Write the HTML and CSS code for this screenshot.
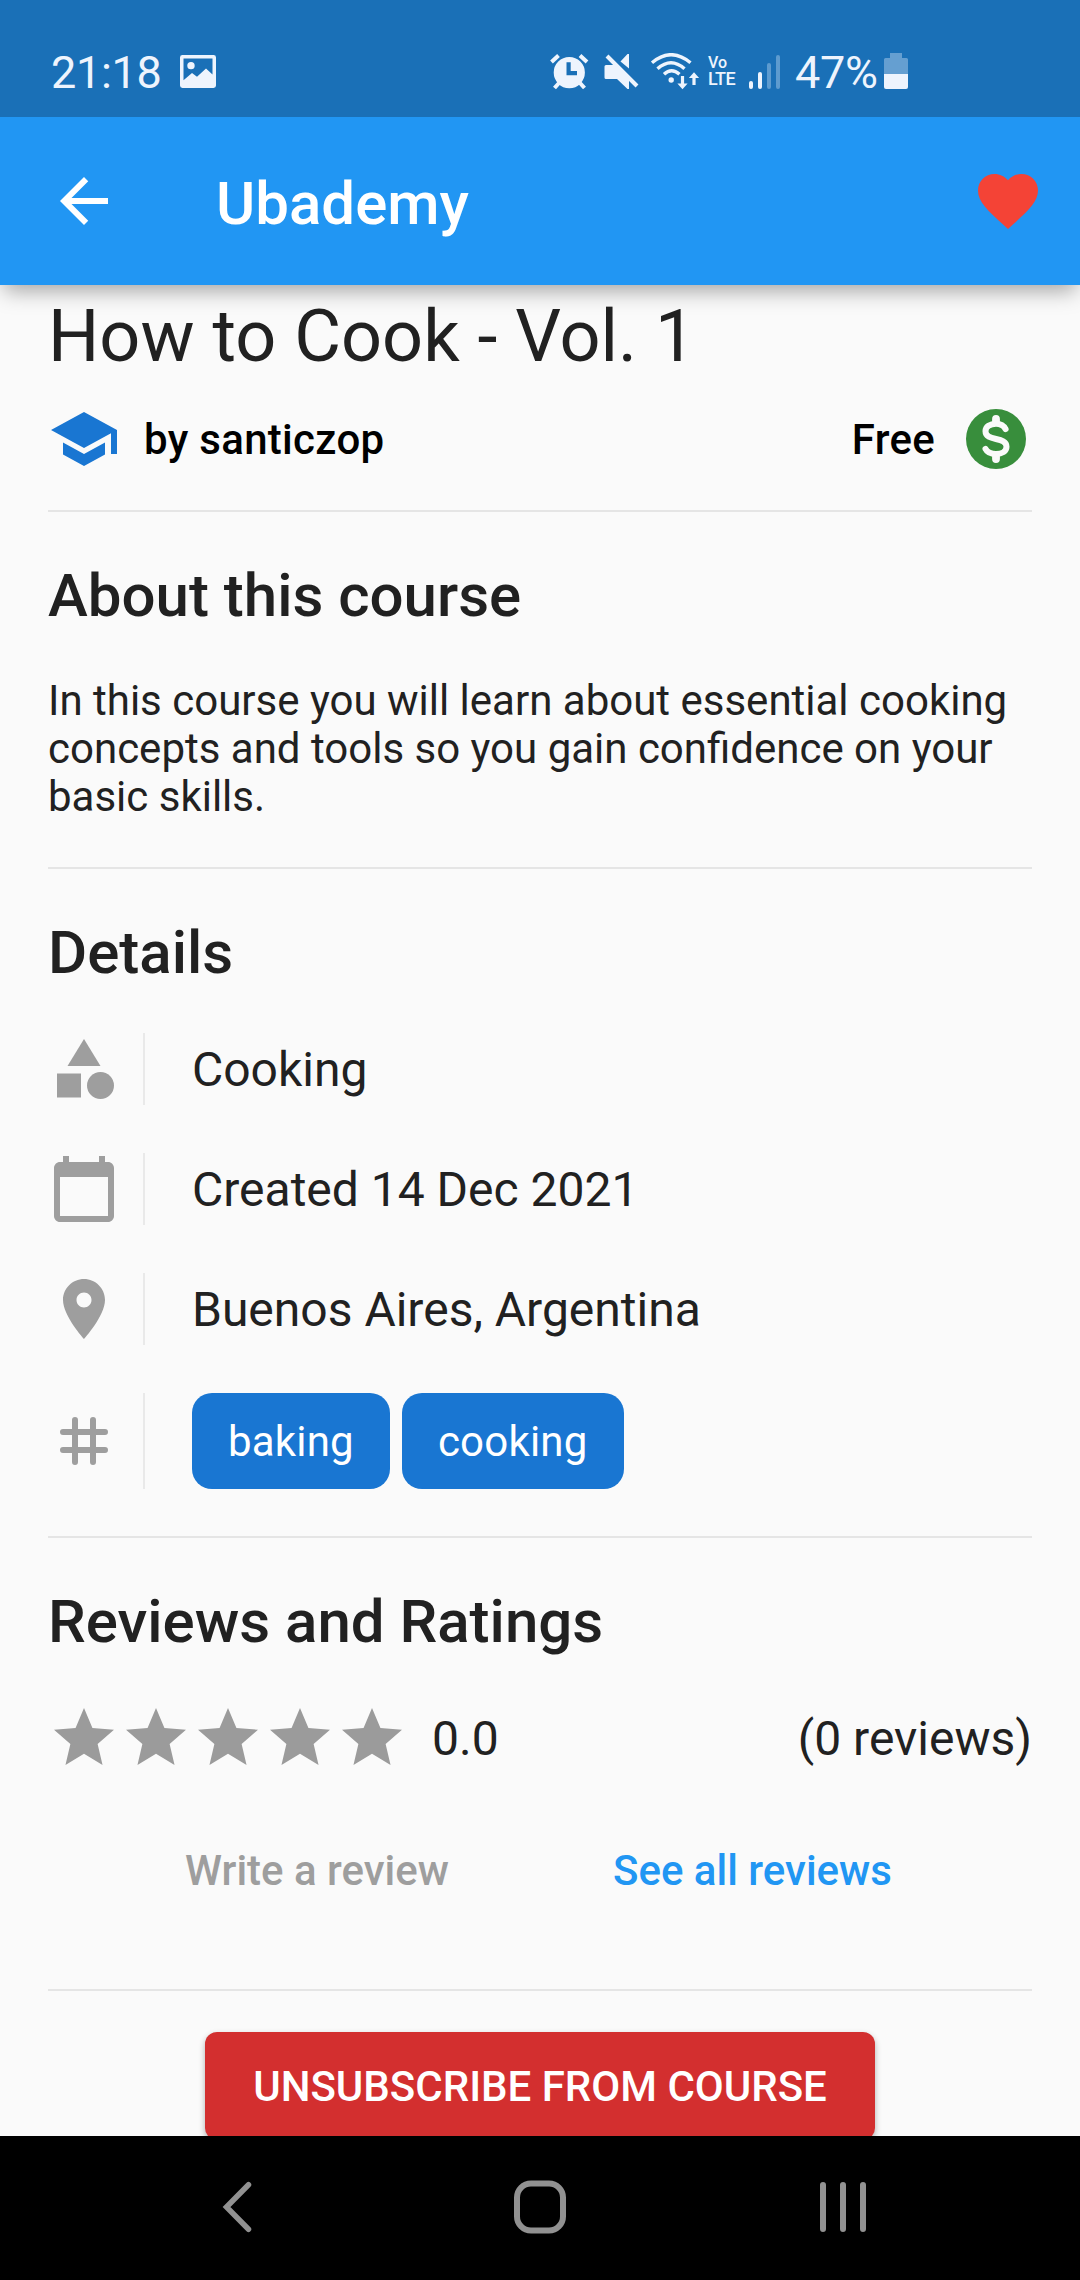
FILE: index.html
```html
<!DOCTYPE html>
<html lang="en">
<head>
<meta charset="utf-8">
<title>Ubademy</title>
<link rel="stylesheet" href="styles.css">
</head>
<body>
<div class="screen">
  <header class="status">
    <span class="time">21:18</span>
    <svg class="st-image" width="36" height="33" viewBox="0 0 36 34" preserveAspectRatio="none"><path fill-rule="evenodd" d="M2.500 0h31a2.500 2.500 0 0 1 2.500 2.500v29a2.500 2.500 0 0 1-2.500 2.500h-31a2.500 2.500 0 0 1-2.500-2.500v-29a2.500 2.500 0 0 1 2.500-2.500zM3.500 3.500v22.500l8.500-7.500 5 4 9-8.500 6.500 6V3.500z"/><circle cx="11" cy="11" r="3.700"/></svg>
    <span class="spacer"></span>
    <svg class="st-alarm" width="40" height="38" viewBox="0 0 40 38"><path fill-rule="evenodd" d="M19.300 3a15.600 15.600 0 1 1 0 31.200 15.600 15.600 0 0 1 0-31.200zM16.500 8.300v12.900h10.500v-4.200h-6.300V8.300z"/><path d="M1.500 8l7-6.500M37 8l-7-6.500M9 29l-4.500 5M30 29l4.500 5" fill="none" stroke="#eef4fd" stroke-width="4"/></svg>
    <svg class="st-mute" width="36" height="38" viewBox="0 0 36 38"><path d="M26 0v14.500L17.500 7.500 24.500 0zM3 11h9l14 14v10h-1.500L14 25H3q-1.500 0-1.500-1.500v-11Q1.500 11 3 11z"/><path d="M4 2l30 30" stroke="#eef4fd" stroke-width="4"/></svg>
    <svg class="st-wifi" width="50" height="38" viewBox="0 0 50 38"><g fill="none" stroke="#eef4fd" stroke-width="3.400"><path d="M2 9.700q19-16 38.500 0M7.500 15.700q13.500-12 27 0M14 21.200q7.500-7 15.500 0"/></g><circle cx="21.200" cy="27" r="2.700"/><path d="M30.900 23h3.200v7.500h3.500l-5.100 5.700-5.100-5.700h3.500zM42.400 32h3.200v-7h3.500L44 19.300 38.900 25h3.500z"/></svg>
    <span class="volte"><span class="vo">Vo</span><span>LTE</span></span>
    <svg class="st-signal" width="32" height="34" viewBox="0 0 32 34"><rect x="0" y="26" width="4" height="8" rx="2"/><rect x="9" y="17" width="4" height="17" rx="2"/><rect class="dim" x="18" y="8" width="4" height="26" rx="2"/><rect class="dim" x="27" y="0" width="4" height="34" rx="2"/></svg>
    <span class="pct">47%</span>
    <svg class="st-batt" width="24" height="36" viewBox="0 0 24 36"><path class="dim2" d="M6 0h12v5h4.500Q24 5 24 6.500V21H0V6.500Q0 5 1.500 5H6z"/><path d="M0 21h24v13q0 2-2 2H2q-2 0-2-2z"/></svg>
  </header>
  <nav class="appbar">
    <svg class="back" width="72" height="72" viewBox="0 0 24 24"><path fill="#fff" d="M20 11H7.830l5.590-5.590L12 4l-8 8 8 8 1.410-1.410L7.830 13H20v-2z"/></svg>
    <h1>Ubademy</h1>
    <svg class="heart" width="72" height="72" viewBox="0 0 24 24"><path fill="#f44336" d="M12 21.350l-1.450-1.320C5.400 15.360 2 12.280 2 8.500 2 5.420 4.420 3 7.500 3c1.740 0 3.410.810 4.500 2.090C13.090 3.810 14.760 3 16.500 3 19.580 3 22 5.420 22 8.500c0 3.780-3.400 6.860-8.550 11.540L12 21.350z"/></svg>
  </nav>
  <main>
    <h2 class="title">How to Cook - Vol. 1</h2>
    <div class="byline">
      <svg width="72" height="72" viewBox="0 0 24 24"><path fill="#1976d2" d="M5 13.180v4L12 21l7-3.820v-4L12 17l-7-3.820zM12 3L1 9l11 6 9-4.910V17h2V9L12 3z"/></svg>
      <span class="author">by santiczop</span>
      <span class="price">Free</span>
      <svg width="72" height="72" viewBox="0 0 24 24"><circle cx="12" cy="12" r="10" fill="#388e3c"/><g fill="none" stroke="#fafafa" stroke-linecap="round"><path d="M15.200 8.700C14.600 7.500 13.500 6.900 12 6.900c-2 0-3.500 1-3.500 2.500 0 3.500 7 1.700 7 5.200 0 1.500-1.500 2.400-3.500 2.400-1.700 0-2.900-.5-3.500-1.700" stroke-width="2"/><path d="M12 5.300v1M12 17.700v1" stroke-width="2.600"/></g></svg>
    </div>
    <section class="about">
      <h3>About this course</h3>
      <p>In this course you will learn about essential cooking concepts and tools so you gain confidence on your basic skills.</p>
    </section>
    <section class="details">
      <h3>Details</h3>
      <div class="row"><svg width="72" height="72" viewBox="0 0 24 24"><path d="M12 2l-5.500 9h11z"/><circle cx="17.500" cy="17.500" r="4.500"/><path d="M3 13.500h8v8H3z"/></svg><span class="cell">Cooking</span></div>
      <div class="row"><svg width="72" height="72" viewBox="0 0 24 24"><path d="M20 3h-1V1h-2v2H7V1H5v2H4c-1.100 0-2 .9-2 2v16c0 1.100.9 2 2 2h16c1.100 0 2-.9 2-2V5c0-1.100-.9-2-2-2zm0 18H4V8h16v13z"/></svg><span class="cell">Created 14 Dec 2021</span></div>
      <div class="row"><svg width="72" height="72" viewBox="0 0 24 24"><path d="M12 2C8.130 2 5 5.130 5 9c0 5.250 7 13 7 13s7-7.750 7-13c0-3.870-3.130-7-7-7zm0 9.500c-1.380 0-2.500-1.120-2.500-2.500s1.120-2.500 2.500-2.500 2.500 1.120 2.500 2.500-1.120 2.500-2.500 2.500z"/></svg><span class="cell">Buenos Aires, Argentina</span></div>
      <div class="row tags"><svg width="72" height="72" viewBox="0 0 24 24"><path d="M5 9h14M5 15h14M9 5v14M15 5v14" fill="none" stroke="#9e9e9e" stroke-width="2" stroke-linecap="round"/></svg><span class="cell"><span class="tag">baking</span><span class="tag">cooking</span></span></div>
    </section>
    <section class="reviews">
      <h3>Reviews and Ratings</h3>
      <div class="rating">
        <svg width="360" height="72" viewBox="0 0 120 24"><defs><path id="star" d="M12 17.270L18.180 21l-1.640-7.030L22 9.240l-7.190-.61L12 2 9.190 8.630 2 9.240l5.460 4.730L5.820 21z"/></defs><use href="#star"/><use href="#star" x="24"/><use href="#star" x="48"/><use href="#star" x="72"/><use href="#star" x="96"/></svg>
        <span class="score">0.0</span>
        <span class="count">(0 reviews)</span>
      </div>
      <div class="actions"><span class="write">Write a review</span><span class="all">See all reviews</span></div>
    </section>
    <div class="cta"><button>UNSUBSCRIBE FROM COURSE</button></div>
  </main>
  <footer class="navbar">
    <svg width="40" height="54" viewBox="0 0 40 54"><path d="M27.500 4.750L5.500 27l22 22.250" fill="none" stroke="#919191" stroke-width="5.500" stroke-linecap="round"/></svg>
    <svg width="54" height="54" viewBox="0 0 54 54"><rect x="4" y="3.500" width="46" height="47" rx="14" fill="none" stroke="#919191" stroke-width="6"/></svg>
    <svg width="48" height="54" viewBox="0 0 48 54"><path d="M4 5v44M24 5v44M44 5v44" stroke="#919191" stroke-width="6" stroke-linecap="round"/></svg>
  </footer>
</div>
</body>
</html>
```
FILE: styles.css
```css
* { box-sizing: border-box; margin: 0; padding: 0; }
body { font-family: Roboto, "Liberation Sans", sans-serif; background: #fafafa; color: #212121; }
svg { display: block; flex: none; }
.screen { width: 1080px; height: 2280px; display: flex; flex-direction: column; overflow: hidden; }

.status { height: 117px; flex: none; position: relative; z-index: 2; background: #1a70b7; color: #eef4fd; fill: #eef4fd; display: flex; align-items: flex-start; padding: 0 172px 0 51px; }
.time, .pct { font-size: 45px; line-height: 54px; padding-top: 46px; letter-spacing: -.3px; }
.time { width: 113px; }
.st-image { margin: 55px 0 0 16px; }
.spacer { flex: 1; }
.st-alarm { margin-top: 54px; }
.st-mute { margin: 54px 0 0 13px; }
.st-wifi { margin: 53px 0 0 11px; }
.volte { display: flex; flex-direction: column; font-size: 18px; font-weight: 500; line-height: 16px; letter-spacing: -.5px; margin: 55px 0 0 8px; width: 29px; }
.vo { font-size: 16px; letter-spacing: 0; }
.st-signal { margin: 55px 0 0 12px; }
.dim { fill: #5d9bcf; }
.dim2 { fill: #659fd1; }
.pct { margin-left: 14px; width: 83px; }
.st-batt { margin: 53px 0 0 6px; }

.appbar { height: 168px; flex: none; background: #2196f3; display: flex; align-items: center; padding: 0 36px 0 48px; position: relative; z-index: 1; box-shadow: 0 10px 20px -4px rgba(0,0,0,.34); }
.appbar h1 { flex: 1; margin-left: 96px; padding-top: 5px; font-size: 60px; font-weight: 500; line-height: 70px; color: #fff; }

main { flex: 1; min-height: 0; overflow: hidden; padding: 10px 48px 0; display: flex; flex-direction: column; }
.title { font-size: 72px; font-weight: 400; line-height: 84px; }
.byline { display: flex; align-items: center; margin-top: 24px; height: 72px; font-size: 42px; font-weight: 500; color: #000; letter-spacing: .3px; }
.author { flex: 1; margin-left: 24px; }
.price { margin-right: 25px; }
section, .cta { border-top: 2px solid #e5e5e5; flex: none; }
section.about { margin-top: 35px; height: 357px; padding-top: 49px; }
h3 { font-size: 60px; font-weight: 500; line-height: 70px; }
.about p { margin-top: 46px; font-size: 42px; line-height: 48px; }
.details { height: 669px; padding-top: 49px; }
.row { display: flex; height: 72px; margin-bottom: 48px; align-items: center; fill: #9e9e9e; }
.details h3 { margin-bottom: 45px; }
.cell { align-self: stretch; margin-left: 23px; padding-left: 47px; border-left: 2px solid #e9e9e9; display: flex; align-items: center; gap: 12px; font-size: 48px; }
.row.tags { height: 96px; margin-bottom: 0; }
.tag { background: #1976d2; color: #fff; height: 96px; line-height: 97px; padding: 0 36px; border-radius: 20px; font-size: 42px; letter-spacing: .2px; }
.reviews { height: 453px; padding-top: 49px; }
.rating { display: flex; align-items: center; height: 72px; margin-top: 45px; font-size: 48px; fill: #9b9b9b; }
.score { flex: 1; margin-left: 24px; }
.actions { margin-top: 72px; display: grid; grid-template-columns: 1fr 1fr; font-size: 42px; font-weight: 500; line-height: 50px; }
.write { color: #9e9e9e; padding-left: 137px; }
.all { color: #2196f3; padding-left: 73px; }
.cta { padding-top: 41px; }
.cta button { display: block; margin: 0 auto; width: 670px; height: 108px; border: 0; border-radius: 12px; background: #d32f2f; color: #fff; font: 500 42px/48px Roboto, sans-serif; padding-top: 1px; white-space: nowrap; box-shadow: 0 3px 6px rgba(0,0,0,.3); }

.navbar { height: 144px; flex: none; background: #000; display: flex; align-items: center; justify-content: space-between; padding: 0 213px 2px 221px; }
```
